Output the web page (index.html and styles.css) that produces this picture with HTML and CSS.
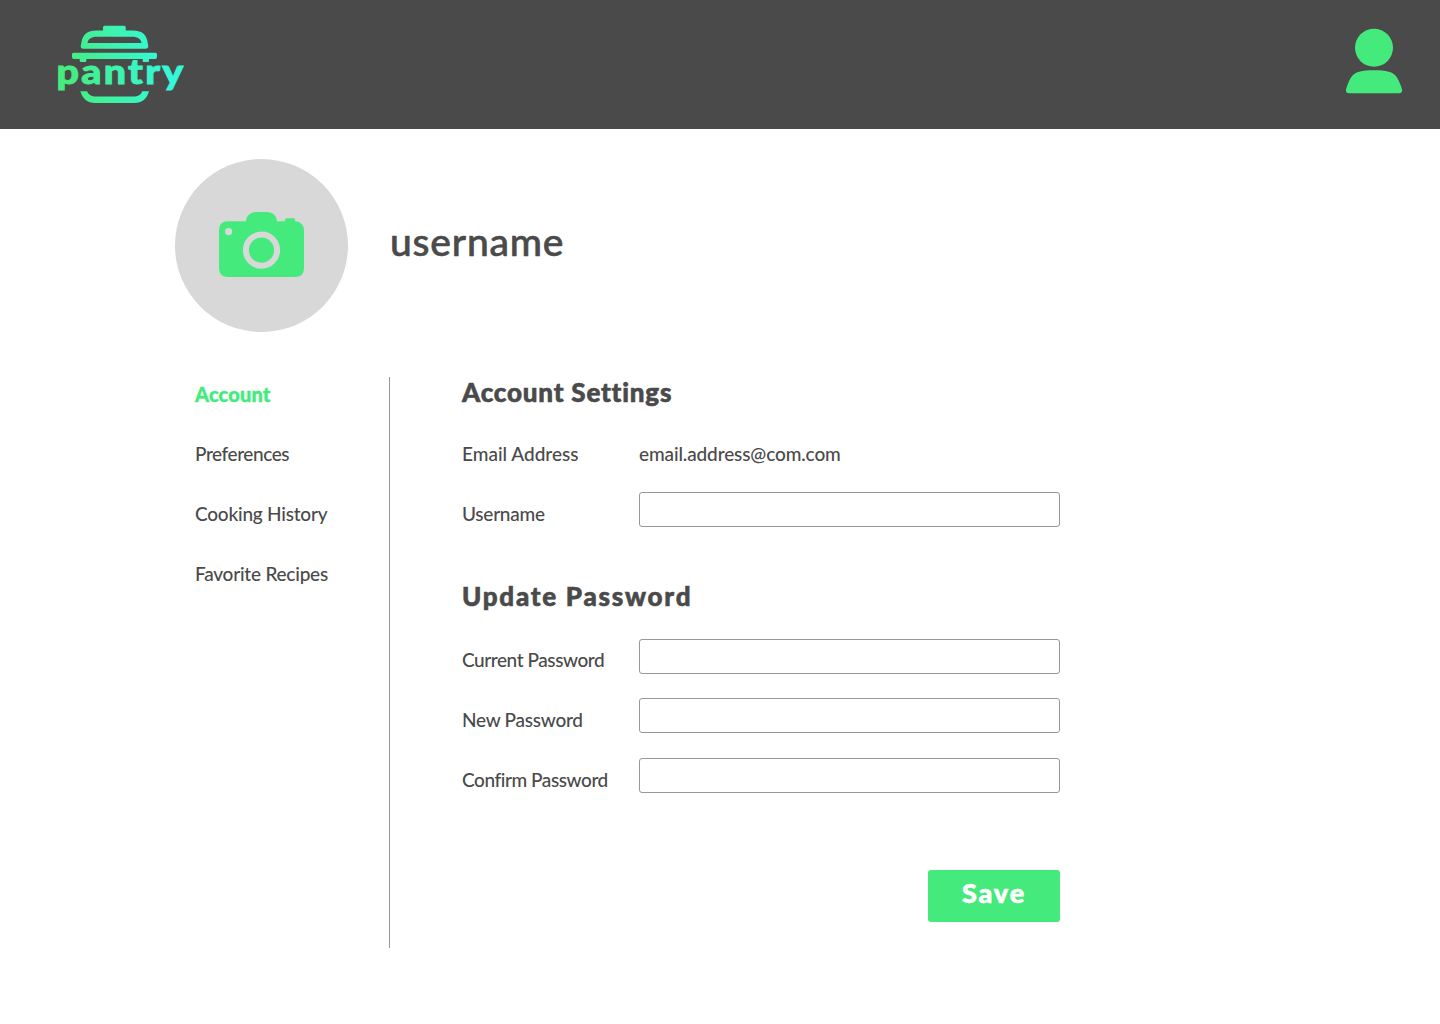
FILE: index.html
```html
<!DOCTYPE html>
<html lang="en">
<head>
<meta charset="utf-8">
<title>Pantry – Account</title>
<link rel="stylesheet" href="styles.css">
</head>
<body>
<header class="topbar">
  <svg class="logo" width="140" height="95" viewBox="50 15 140 95" role="img" aria-label="pantry">
    <defs>
      <linearGradient id="brand" gradientUnits="userSpaceOnUse" x1="66" y1="72" x2="160" y2="56">
        <stop offset="0" stop-color="#46ec7d"/>
        <stop offset="1" stop-color="#36f8d8"/>
      </linearGradient>
    </defs>
    <g fill="url(#brand)">
      <path fill-rule="evenodd" d="M103 30.5V27.5Q103 25.8 104.700 25.800H124Q125.700 25.800 125.700 27.500V30.500H133C141 30.500 146 34 147.200 40.500L148.200 45.500Q148.500 48.700 145.500 48.700H83.500Q80.300 48.700 80.800 45.500L81.800 40.500C83.500 34 88 30.500 96 30.500ZM97 36.700C91 36.700 88 39 87.500 43H141.500C141 39 138 36.700 132 36.700Z"/>
      <path d="M73.500 52.700H155.500Q157 52.700 157 54.200V57Q157 59 155 59H149V61Q149 62 148 62H143.700Q142.700 62 142.700 61V59H86.300V61Q86.300 62 85.300 62H80.700Q79.700 62 79.700 61V59H74Q72 59 72 57V54.200Q72 52.700 73.500 52.700Z"/>
      <path d="M80.300 91.200H87C88.500 94.500 91 96.400 94.500 96.400H135C138.500 96.400 141 94.500 142.300 91.200H149C147 98.500 142 103 134.500 103H95C87.500 103 82.500 98.500 80.300 91.200Z"/>
      <text class="wordmark" x="56.500" y="84.300" textLength="129" lengthAdjust="spacingAndGlyphs">pantry</text>
    </g>
  </svg>
  <svg class="user" width="58" height="66" viewBox="1345 28 58 66" fill="#44eb7c">
    <circle cx="1374" cy="47.700" r="19"/>
    <path d="M1374 70.200C1362 70.200 1354.500 71.500 1351 77.500C1348.500 81.500 1347 86 1346 89.500C1345.500 92 1347 93.300 1349 93.300H1399C1401.500 93.300 1402.700 91.500 1402 89.300C1401 85.500 1399.300 81.500 1397 77.500C1393.500 71.500 1386 70.200 1374 70.200Z"/>
  </svg>
</header>

<section class="profile">
  <div class="avatar">
    <svg width="85" height="65" viewBox="219 212 85 65">
      <path fill="#44eb7c" d="M228 221.200H246C246.500 215.500 250.500 212 256 212H267C272.500 212 276.500 215.500 277 221.200H285V220Q285 218.300 286.700 218.300H293.500Q295 218.300 295 220V221.200C300.500 221.500 304 225 304 230V268Q304 277 295 277H228Q219 277 219 268V230Q219 221.200 228 221.200Z"/>
      <circle cx="228.600" cy="231.600" r="3.600" fill="#d8d8d8"/>
      <circle cx="261.500" cy="250.200" r="15.600" fill="none" stroke="#d8d8d8" stroke-width="6"/>
    </svg>
  </div>
  <h1 class="name">username</h1>
</section>

<div class="body">
  <nav class="menu">
    <a class="item active">Account</a>
    <a class="item snug">Preferences</a>
    <a class="item">Cooking History</a>
    <a class="item">Favorite Recipes</a>
  </nav>
  <main class="settings">
    <h2 class="title">Account Settings</h2>
    <div class="row">
      <span class="label email-label">Email Address</span>
      <span class="value">email.address@com.com</span>
    </div>
    <div class="row">
      <label class="label" for="username">Username</label>
      <input class="field" id="username" type="text">
    </div>
    <h2 class="title second">Update Password</h2>
    <div class="row">
      <label class="label snug" for="current">Current Password</label>
      <input class="field low" id="current" type="password">
    </div>
    <div class="row">
      <label class="label" for="new">New Password</label>
      <input class="field" id="new" type="password">
    </div>
    <div class="row">
      <label class="label snug" for="confirm">Confirm Password</label>
      <input class="field" id="confirm" type="password">
    </div>
    <button class="save" type="button">Save</button>
  </main>
</div>
</body>
</html>
```
FILE: styles.css
```css
* { box-sizing: border-box; }

body {
  margin: 0;
  background: #fff;
  color: #4a4a4a;
  font-family: Futura, Lato, sans-serif;
  font-size: 19px;
  font-variant-ligatures: none;
}

.topbar {
  display: flex;
  justify-content: space-between;
  align-items: flex-start;
  height: 129px;
  padding: 15px 37px 0 50px;
  background: #4a4a4a;
}

.logo, .user { display: block; }
.user { margin-top: 13px; }

.wordmark {
  font-size: 34px;
  font-weight: 900;
  letter-spacing: 2px;
  stroke: url(#brand);
  stroke-width: 0.9px;
}

.profile {
  display: flex;
  align-items: center;
  gap: 42px;
  padding: 30px 0 0 175px;
}

.avatar {
  display: flex;
  align-items: center;
  justify-content: center;
  width: 173px;
  height: 173px;
  padding-bottom: 2px;
  border-radius: 50%;
  background: #d8d8d8;
}

.name {
  margin: 0 0 10px;
  font-size: 39px;
  font-weight: 500;
  letter-spacing: 0.8px;
  line-height: 48px;
  -webkit-text-stroke: 0.6px;
}

.body {
  display: flex;
  height: 571px;
  margin-top: 45px;
}

.menu {
  display: flex;
  flex-direction: column;
  width: 390px;
  padding: 0 0 0 195px;
  border-right: 1px solid #979797;
}

.item {
  height: 60px;
  line-height: 34px;
  letter-spacing: -0.22px;
  font-weight: 500;
}

.item.active {
  color: #44eb7c;
  font-size: 20px;
  font-weight: 900;
  letter-spacing: 0.15px;
  -webkit-text-stroke: 0.4px;
}

.settings {
  display: flex;
  flex-direction: column;
  width: 670px;
  padding-left: 72px;
}

.title {
  height: 47px;
  margin: 0;
  font-size: 26px;
  font-weight: 900;
  line-height: 30px;
  letter-spacing: 0.8px;
  -webkit-text-stroke: 0.6px;
}

.title.second {
  height: 49px;
  margin-top: 37px;
  letter-spacing: 1.75px;
}

.row {
  display: flex;
  height: 60px;
}

.label {
  width: 177px;
  line-height: 60px;
  letter-spacing: -0.25px;
  font-weight: 500;
}

.email-label { letter-spacing: 0; }
.item.snug, .label.snug { letter-spacing: -0.43px; }

.value {
  line-height: 60px;
  font-weight: 500;
  letter-spacing: -0.12px;
}

.field {
  width: 421px;
  height: 35px;
  margin: 8px 0 0;
  border: 1px solid #979797;
  border-radius: 3px;
  background: #fff;
  font: inherit;
}

.field.low { margin-top: 9px; }

.save {
  align-self: flex-end;
  width: 132px;
  height: 52px;
  margin-top: 60px;
  padding: 0 0 7px;
  border: 0;
  border-radius: 3px;
  background: #44eb7c;
  color: #fff;
  font: 900 27px/45px Futura, Lato, sans-serif;
  letter-spacing: 1.9px;
  -webkit-text-stroke: 0.6px;
}
```
